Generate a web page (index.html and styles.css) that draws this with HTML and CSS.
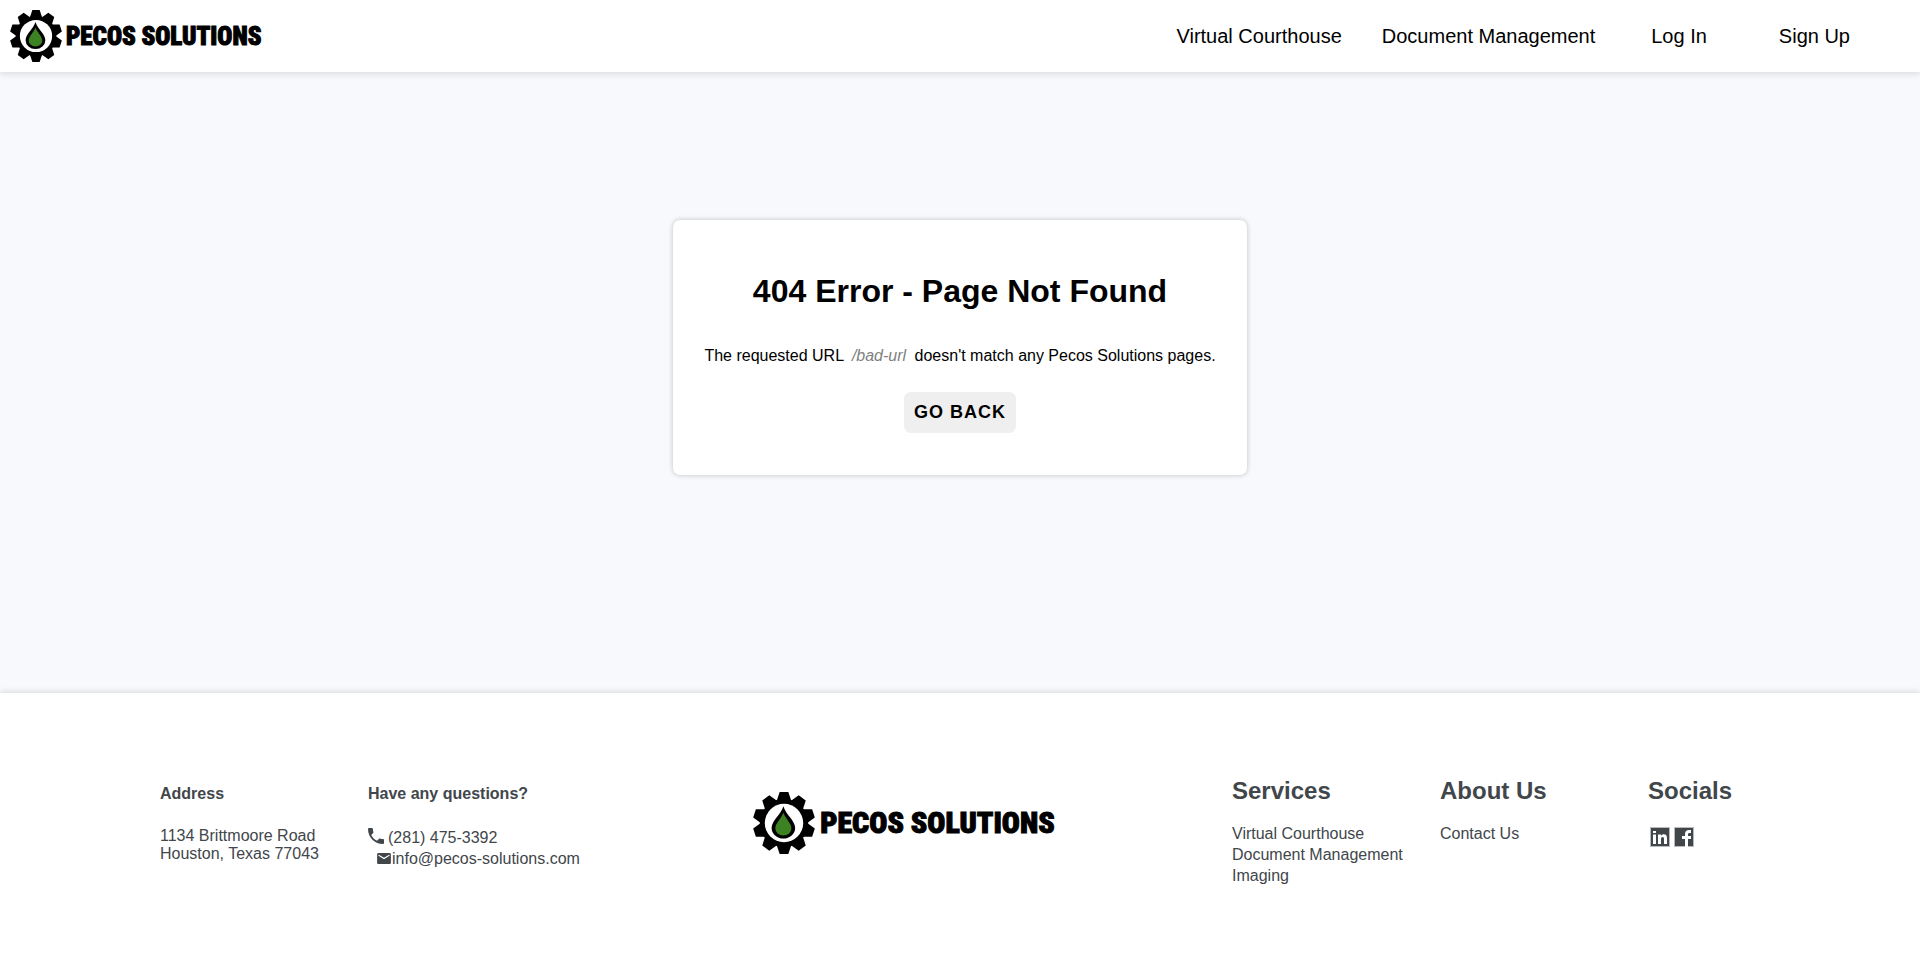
FILE: index.html
```html
<!DOCTYPE html>
<html lang="en">
<head>
<meta charset="utf-8">
<meta name="viewport" content="width=device-width, initial-scale=1">
<title>Pecos Solutions</title>
<link rel="stylesheet" href="styles.css">
</head>
<body>
<svg class="defs" aria-hidden="true">
  <symbol id="gear" viewBox="-50 -50 100 100">
    <circle r="39"/>
    <path id="tooth" d="M-12-35L-7-50H7L12-35Z"/>
    <use href="#tooth" transform="rotate(36)"/>
    <use href="#tooth" transform="rotate(72)"/>
    <use href="#tooth" transform="rotate(108)"/>
    <use href="#tooth" transform="rotate(144)"/>
    <use href="#tooth" transform="rotate(180)"/>
    <use href="#tooth" transform="rotate(216)"/>
    <use href="#tooth" transform="rotate(252)"/>
    <use href="#tooth" transform="rotate(288)"/>
    <use href="#tooth" transform="rotate(324)"/>
    <circle r="31" fill="#fff"/>
    <path d="M-1-27C3-13 18-4 18 8A19 17 0 0 1-20 8C-20-4-5-13-1-27Z"/>
    <path d="M-1-17C2-7 12 0 12 9A13 11 0 0 1-14 9C-14 0-4-7-1-17Z" fill="#3c8223"/>
  </symbol>
</svg>
<header class="header">
  <a class="logo" href="#"><svg class="logo-mark" aria-hidden="true"><use href="#gear"/></svg><span>PECOS SOLUTIONS</span></a>
  <nav class="nav">
    <a href="#">Virtual Courthouse</a>
    <a href="#">Document Management</a>
    <a class="account" href="#">Log In</a>
    <a class="account" href="#">Sign Up</a>
  </nav>
</header>
<main class="main">
  <section class="card">
    <h1>404 Error - Page Not Found</h1>
    <p>The requested URL <em>/bad-url</em> doesn't match any Pecos Solutions pages.</p>
    <button type="button">GO BACK</button>
  </section>
</main>
<footer class="footer">
  <section class="contact">
    <h3>Address</h3>
    <address>1134 Brittmoore Road<br>Houston, Texas 77043</address>
  </section>
  <section class="contact">
    <h3>Have any questions?</h3>
    <ul>
      <li><a class="phone" href="#"><svg viewBox="3 3 18 18" aria-hidden="true"><path d="M6.62 10.79c1.44 2.83 3.76 5.14 6.59 6.59l2.2-2.2c.27-.27.67-.36 1.02-.24 1.12.37 2.33.57 3.57.57.55 0 1 .45 1 1V20c0 .55-.45 1-1 1-9.39 0-17-7.61-17-17 0-.55.45-1 1-1h3.5c.55 0 1 .45 1 1 0 1.25.2 2.45.57 3.57.11.35.03.74-.25 1.02l-2.2 2.2z"/></svg>(281) 475-3392</a></li>
      <li><a class="mail" href="#"><svg viewBox="2 4 20 16" aria-hidden="true"><path d="M20 4H4c-1.1 0-1.99.9-1.99 2L2 18c0 1.1.9 2 2 2h16c1.1 0 2-.9 2-2V6c0-1.1-.9-2-2-2zm0 4l-8 5-8-5V6l8 5 8-5v2z"/></svg>info@pecos-solutions.com</a></li>
    </ul>
  </section>
  <a class="logo logo-large" href="#"><svg class="logo-mark" aria-hidden="true"><use href="#gear"/></svg><span>PECOS SOLUTIONS</span></a>
  <section class="links">
    <h2>Services</h2>
    <ul>
      <li><a href="#">Virtual Courthouse</a></li>
      <li><a href="#">Document Management</a></li>
      <li><a href="#">Imaging</a></li>
    </ul>
  </section>
  <section class="links">
    <h2>About Us</h2>
    <ul><li><a href="#">Contact Us</a></li></ul>
  </section>
  <section class="links">
    <h2>Socials</h2>
    <div class="socials">
      <a href="#" aria-label="LinkedIn"><svg viewBox="0 0 20 20"><path class="edge" d="M0 0h20v20H0z"/><path d="M1 1h18v18H1z"/><path class="cut" d="M3 4h3v2H3zM3 7.500h3V17H3zM8 7.500h3v1.300c.7-1 1.600-1.500 2.800-1.500 2.300 0 3.200 1.500 3.200 4V17h-3v-5.200c0-1.200-.4-1.900-1.400-1.900S11 10.700 11 11.900V17H8z"/></svg></a>
      <a href="#" aria-label="Facebook"><svg viewBox="0 0 20 20"><path class="edge" d="M0 0h20v20H0z"/><path d="M1 1h18v18H1z"/><path class="cut" d="M17 3v3h-1.500c-1 0-1.500.5-1.500 1.500V9h3v3h-3v8h-3v-8H8V9h3V7c0-2.500 1.500-4 4-4z"/></svg></a>
    </div>
  </section>
</footer>
</body>
</html>
```
FILE: styles.css
```css
* { box-sizing: border-box; }

body {
  display: flex;
  flex-direction: column;
  min-height: 100vh;
  margin: 0;
  background: #f8f9fd;
  color: #000;
  font-family: Arial, "Liberation Sans", sans-serif;
  font-size: 16px;
  line-height: 18px;
}

a { color: inherit; text-decoration: none; }
h1, h2, h3, p, ul { margin: 0; padding: 0; }
ul { list-style: none; }
address { font-style: normal; }
.defs { position: absolute; width: 0; height: 0; }

.header {
  display: flex;
  align-items: center;
  justify-content: space-between;
  padding: 10px 34px 10px 10px;
  background: #fff;
  box-shadow: 0 3px 6px rgba(0, 0, 0, 0.1);
}

.logo {
  display: flex;
  align-items: center;
  gap: 4px;
  color: #000;
  font-family: Impact, "Roboto Condensed", Roboto, sans-serif;
  font-size: 25px;
  font-weight: 900;
  line-height: 1;
  white-space: nowrap;
  -webkit-text-stroke: 1px #000;
}
.logo-mark { width: 52px; height: 52px; flex: none; stroke: none; }

.nav { display: flex; gap: 40px; font-size: 20px; line-height: 24px; }
.account { padding: 0 36px; }
.nav .account { margin-left: -20px; }
.account + .account { margin-left: -40px; }

.main {
  display: flex;
  flex: 1;
  align-items: flex-start;
  justify-content: center;
  padding: 148px 16px 64px;
}
.card {
  display: flex;
  flex-direction: column;
  align-items: center;
  padding: 53px 31px 42px;
  background: #fff;
  border-radius: 7px;
  box-shadow: 0 0 5px rgba(0, 0, 0, 0.24);
  text-align: center;
}
.card h1 { font-size: 32px; line-height: 36px; }
.card p { margin: 38px 0 27px; }
.card em { margin: 0 4px; color: #808080; }
.card button {
  padding: 8px 10px 9px;
  border: 0;
  border-radius: 7px;
  background: #efefef;
  color: #000;
  font: bold 18px/24px Arial, "Liberation Sans", sans-serif;
  letter-spacing: 1px;
}

.footer {
  display: grid;
  grid-template-columns: 208px 208px 1fr 208px 208px 112px;
  padding: 84px 160px 83px;
  background: #fff;
  box-shadow: 0 -2px 5px rgba(0, 0, 0, 0.1);
  color: #41464b;
}
.contact { padding-top: 8px; }
.contact h3 { margin-bottom: 24px; font-size: 16px; }
.contact li, .links li { line-height: 21px; white-space: nowrap; }
.contact svg, .links svg { flex: none; fill: #41464b; }
.phone, .mail { display: flex; align-items: center; }
.phone { gap: 4px; }
.phone svg { width: 16px; height: 16px; margin-bottom: 4px; }
.mail { gap: 1px; padding-left: 9px; }
.mail svg { width: 14px; height: 11px; }

.logo-large { align-self: start; justify-self: center; margin-top: 15px; gap: 5px; font-size: 30px; }
.logo-large .logo-mark { width: 62px; height: 62px; }

.links h2 { margin-bottom: 18px; font-size: 24px; line-height: 28px; }
.socials { display: flex; gap: 4px; padding: 4px 2px; }
.socials svg { display: block; width: 20px; height: 20px; }
.socials .edge { fill: #b8babc; }
.socials .cut { fill: #fff; }
```
